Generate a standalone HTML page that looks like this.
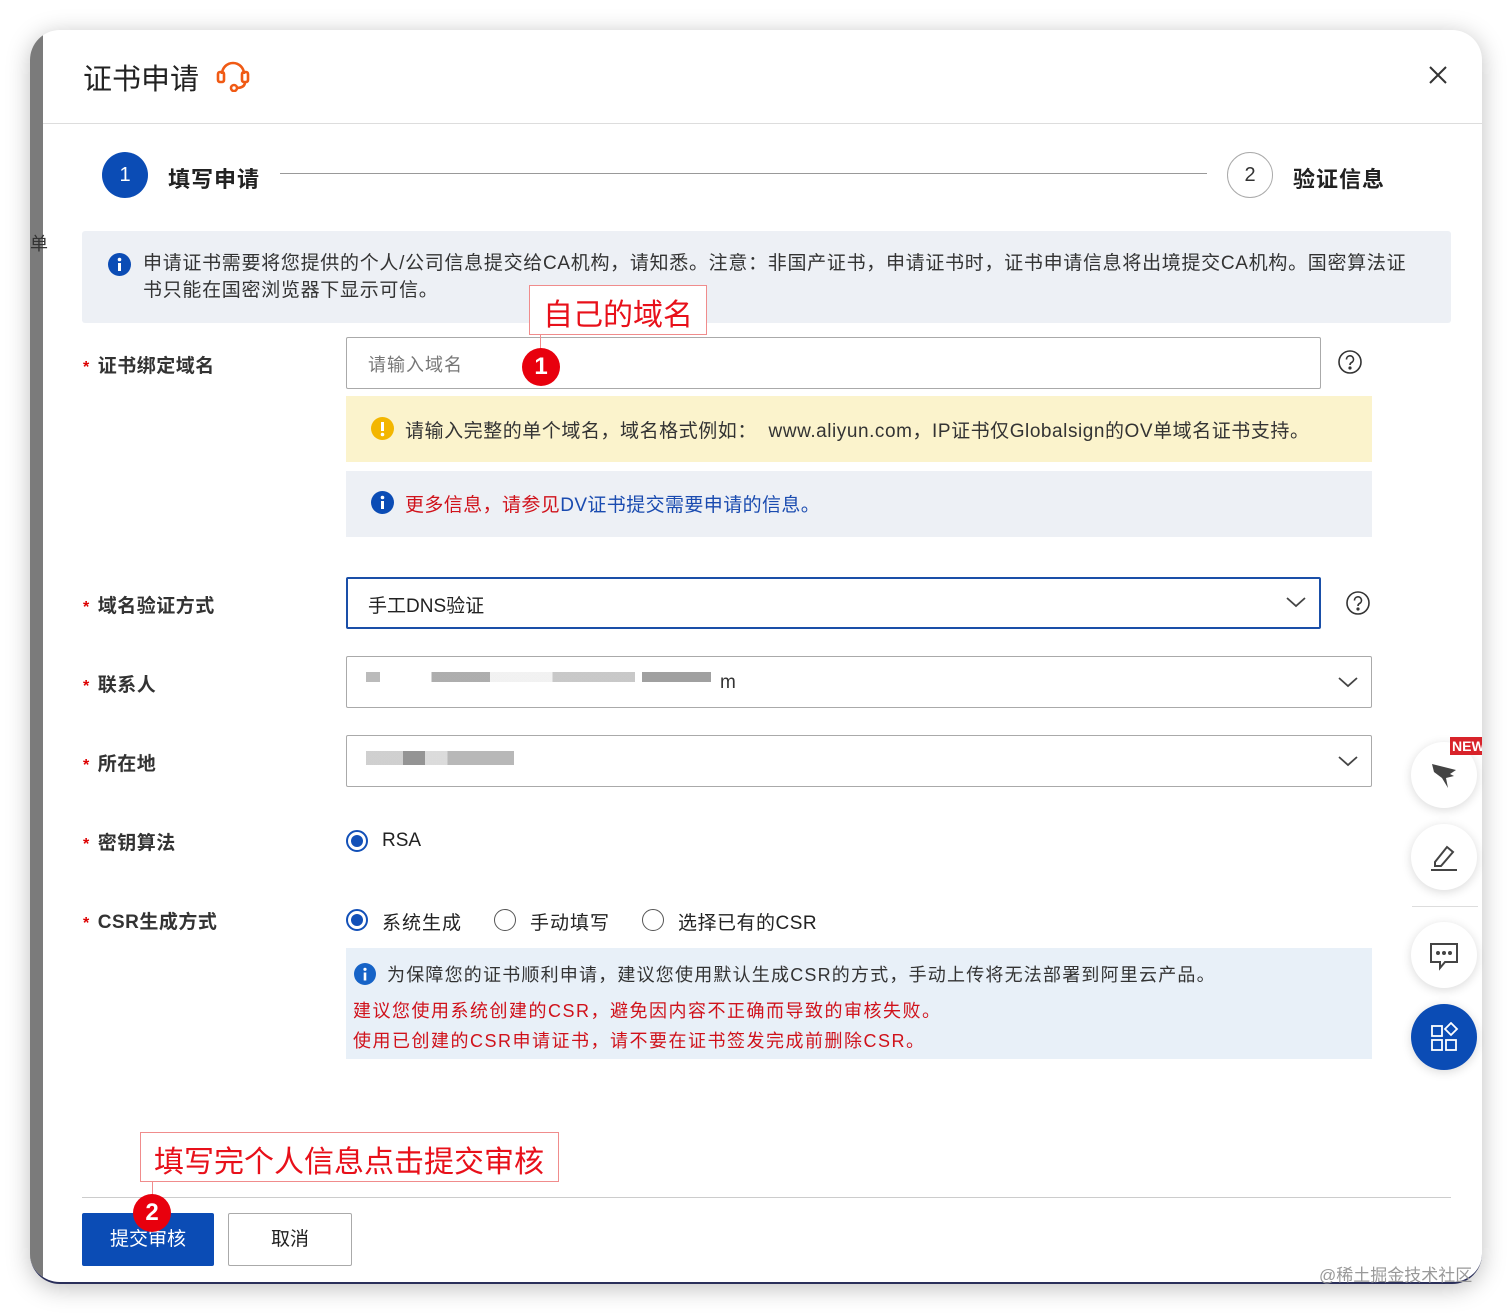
<!DOCTYPE html>
<html><head><meta charset="utf-8"><style>
*{box-sizing:border-box;margin:0;padding:0}
body{width:1512px;height:1315px;background:#fff;position:relative;overflow:hidden;font-family:"Liberation Sans","Noto Sans CJK SC",sans-serif;color:#333}
.abs{position:absolute}
.win{left:30px;top:30px;width:1452px;height:1254px;border-radius:30px;overflow:hidden;box-shadow:0 4px 24px rgba(0,0,0,.25);background:#fff;border-bottom:2px solid #2a2f5a}
.strip{left:0;top:0;width:13px;height:100%;background:#7b7b7b}
.lbl{font-size:19px;font-weight:bold;color:#333;letter-spacing:.5px}
.lbl b{color:#d00;margin-right:8px;font-size:16px}
.box{border:1px solid #aaa;border-radius:2px;background:#fff}
.t18{font-size:18px}
.radio{width:22px;height:22px;border-radius:50%;border:1.5px solid #555}
.radio.on{border:2px solid #1250b8}
.radio.on::after{content:"";position:absolute;left:3px;top:3px;width:12px;height:12px;border-radius:50%;background:#1250b8}
.badge{width:38px;height:38px;border-radius:50%;background:#e8000d;color:#fff;font-size:24px;font-weight:bold;text-align:center;line-height:38px}
.fb{width:66px;height:66px;border-radius:50%;background:#fff;box-shadow:0 2px 10px rgba(0,0,0,.15)}
</style></head><body>
<div class="abs win">
 <div class="abs strip"></div>
 <div class="abs" style="left:0;top:200px;font-size:18px;color:#333">单</div>
</div>
<!-- header -->
<div class="abs" style="left:83px;top:56px;font-size:29px;color:#222">证书申请</div>
<svg class="abs" style="left:214px;top:56px" width="38" height="36" viewBox="0 0 38 36" fill="none" stroke="#f05a14" stroke-width="2.6"><path d="M8 18 a11 11 0 0 1 22 0"/><rect x="4" y="16" width="6" height="10" rx="2"/><rect x="28" y="16" width="6" height="10" rx="2"/><path d="M31 26 q0 6 -9 6"/><circle cx="20" cy="32" r="3"/></svg>
<svg class="abs" style="left:1428px;top:65px" width="20" height="20" stroke="#333" stroke-width="2"><path d="M2 2L18 18M18 2L2 18"/></svg>
<div class="abs" style="left:43px;top:123px;width:1439px;height:1px;background:#ddd"></div>
<!-- steps -->
<div class="abs" style="left:102px;top:152px;width:46px;height:46px;border-radius:50%;background:#0b4cb5;color:#fff;font-size:20px;text-align:center;line-height:46px">1</div>
<div class="abs" style="left:168px;top:162px;font-size:22px;font-weight:bold;color:#222;letter-spacing:1px">填写申请</div>
<div class="abs" style="left:280px;top:173px;width:927px;height:1px;background:#999"></div>
<div class="abs" style="left:1227px;top:152px;width:46px;height:46px;border-radius:50%;border:1px solid #aaa;color:#333;font-size:20px;text-align:center;line-height:44px">2</div>
<div class="abs" style="left:1293px;top:162px;font-size:22px;font-weight:bold;color:#222;letter-spacing:1px">验证信息</div>
<!-- info -->
<div class="abs" style="left:82px;top:231px;width:1369px;height:92px;background:#edf0f5;border-radius:3px"></div>
<svg class="abs" style="left:108px;top:253px" width="23" height="23"><circle cx="11.5" cy="11.5" r="11.5" fill="#0b4cb5"/><rect x="10" y="10" width="3" height="8" fill="#fff"/><circle cx="11.5" cy="6.5" r="1.8" fill="#fff"/></svg>
<div class="abs" style="left:143px;top:250px;width:1300px;line-height:27px;color:#333;font-size:19px;letter-spacing:.7px;white-space:nowrap">申请证书需要将您提供的个人/公司信息提交给CA机构，请知悉。注意：非国产证书，申请证书时，证书申请信息将出境提交CA机构。国密算法证<br>书只能在国密浏览器下显示可信。</div>
<!-- labels -->
<div class="abs lbl" style="left:83px;top:351px"><b>*</b>证书绑定域名</div>
<div class="abs lbl" style="left:83px;top:591px"><b>*</b>域名验证方式</div>
<div class="abs lbl" style="left:83px;top:670px"><b>*</b>联系人</div>
<div class="abs lbl" style="left:83px;top:749px"><b>*</b>所在地</div>
<div class="abs lbl" style="left:83px;top:828px"><b>*</b>密钥算法</div>
<div class="abs lbl" style="left:83px;top:907px"><b>*</b>CSR生成方式</div>
<!-- domain input -->
<div class="abs box" style="left:346px;top:337px;width:975px;height:52px"></div>
<div class="abs t18" style="left:368px;top:351px;color:#777;letter-spacing:1px">请输入域名</div>
<svg class="abs" style="left:1337px;top:349px" width="26" height="26" fill="none" stroke="#333" stroke-width="1.6"><circle cx="13" cy="13" r="11"/><path d="M9.5 10.5a3.5 3.5 0 1 1 5 3c-1.2.6-1.5 1.2-1.5 2.5"/><circle cx="13" cy="19" r=".8" fill="#333"/></svg>
<div class="abs" style="left:346px;top:396px;width:1026px;height:66px;background:#fbf3cc"></div>
<svg class="abs" style="left:371px;top:417px" width="23" height="23"><circle cx="11.5" cy="11.5" r="11.5" fill="#f3b600"/><rect x="10" y="5" width="3" height="9" fill="#fff"/><circle cx="11.5" cy="17.5" r="1.8" fill="#fff"/></svg>
<div class="abs t18" style="left:405px;top:416px;font-size:19px;color:#333;letter-spacing:.55px;white-space:nowrap">请输入完整的单个域名，域名格式例如：&nbsp; www.aliyun.com，IP证书仅Globalsign的OV单域名证书支持。</div>
<div class="abs" style="left:346px;top:471px;width:1026px;height:66px;background:#edf0f5"></div>
<svg class="abs" style="left:371px;top:491px" width="23" height="23"><circle cx="11.5" cy="11.5" r="11.5" fill="#0b4cb5"/><rect x="10" y="10" width="3" height="8" fill="#fff"/><circle cx="11.5" cy="6.5" r="1.8" fill="#fff"/></svg>
<div class="abs" style="left:405px;top:490px;font-size:19px;color:#1a4bb0;letter-spacing:.4px"><span style="color:#d0121b">更多信息，请参见</span>DV证书提交需要申请的信息。</div>
<!-- annotation 1 -->
<div class="abs" style="left:529px;top:285px;width:178px;height:50px;border:1.5px solid #f08c8c;background:#fff"></div>
<div class="abs" style="left:543px;top:290px;font-size:30px;color:#e8101a">自己的域名</div>
<div class="abs" style="left:540px;top:334px;width:1px;height:16px;background:#f08c8c"></div>
<div class="abs badge" style="left:522px;top:348px">1</div>
<!-- dns select -->
<div class="abs" style="left:346px;top:577px;width:975px;height:52px;border:2px solid #1a4fa8;border-radius:2px"></div>
<div class="abs t18" style="left:368px;top:591px;font-size:19px;color:#222">手工DNS验证</div>
<svg class="abs" style="left:1285px;top:595px" width="22" height="14" fill="none" stroke="#444" stroke-width="1.8"><path d="M2 3l9 8 9-8"/></svg>
<svg class="abs" style="left:1345px;top:590px" width="26" height="26" fill="none" stroke="#333" stroke-width="1.6"><circle cx="13" cy="13" r="11"/><path d="M9.5 10.5a3.5 3.5 0 1 1 5 3c-1.2.6-1.5 1.2-1.5 2.5"/><circle cx="13" cy="19" r=".8" fill="#333"/></svg>
<div class="abs box" style="left:346px;top:656px;width:1026px;height:52px"></div>
<div class="abs" style="left:366px;top:672px;width:345px;height:10px;background:linear-gradient(90deg,#aaa 0 4%,#fff 4% 19%,#999 19% 36%,#eee 36% 54%,#bbb 54% 78%,#fff 78% 80%,#888 80% 100%);opacity:.8"></div>
<div class="abs" style="left:720px;top:672px;font-size:19px;color:#333">m</div>
<svg class="abs" style="left:1337px;top:675px" width="22" height="14" fill="none" stroke="#444" stroke-width="1.8"><path d="M2 3l9 8 9-8"/></svg>
<div class="abs box" style="left:346px;top:735px;width:1026px;height:52px"></div>
<div class="abs" style="left:366px;top:751px;width:148px;height:14px;background:linear-gradient(90deg,#bbb 0 25%,#666 25% 40%,#ccc 40% 55%,#999 55% 100%);opacity:.7"></div>
<svg class="abs" style="left:1337px;top:754px" width="22" height="14" fill="none" stroke="#444" stroke-width="1.8"><path d="M2 3l9 8 9-8"/></svg>
<!-- radios -->
<div class="abs radio on" style="left:346px;top:830px"></div>
<div class="abs" style="left:382px;top:830px;font-size:19px;color:#222">RSA</div>
<div class="abs radio on" style="left:346px;top:909px"></div>
<div class="abs" style="left:382px;top:908px;font-size:19px;color:#222;letter-spacing:1px">系统生成</div>
<div class="abs radio" style="left:494px;top:909px"></div>
<div class="abs" style="left:530px;top:908px;font-size:19px;color:#222;letter-spacing:1px">手动填写</div>
<div class="abs radio" style="left:642px;top:909px"></div>
<div class="abs" style="left:678px;top:908px;font-size:19px;color:#222;letter-spacing:.5px">选择已有的CSR</div>
<div class="abs" style="left:346px;top:948px;width:1026px;height:111px;background:#e8f0f8"></div>
<svg class="abs" style="left:354px;top:963px" width="22" height="22"><circle cx="11" cy="11" r="11" fill="#1663c7"/><rect x="9.7" y="9.5" width="2.6" height="8" fill="#fff"/><circle cx="11" cy="6.3" r="1.6" fill="#fff"/></svg>
<div class="abs" style="left:387px;top:961px;font-size:18px;color:#333;letter-spacing:1.2px;white-space:nowrap">为保障您的证书顺利申请，建议您使用默认生成CSR的方式，手动上传将无法部署到阿里云产品。</div>
<div class="abs" style="left:353px;top:997px;font-size:18px;color:#d0121b;letter-spacing:1.5px;white-space:nowrap">建议您使用系统创建的CSR，避免因内容不正确而导致的审核失败。</div>
<div class="abs" style="left:353px;top:1027px;font-size:18px;color:#d0121b;letter-spacing:1.5px;white-space:nowrap">使用已创建的CSR申请证书，请不要在证书签发完成前删除CSR。</div>
<!-- footer -->
<div class="abs" style="left:140px;top:1132px;width:419px;height:50px;border:1.5px solid #f08c8c;background:#fff"></div>
<div class="abs" style="left:154px;top:1137px;font-size:30px;color:#e8101a">填写完个人信息点击提交审核</div>
<div class="abs" style="left:152px;top:1181px;width:1px;height:16px;background:#f08c8c"></div>
<div class="abs" style="left:82px;top:1197px;width:1369px;height:1px;background:#ccc"></div>
<div class="abs" style="left:82px;top:1213px;width:132px;height:53px;background:#0b4cb5;border-radius:2px;color:#fff;font-size:19px;text-align:center;line-height:53px">提交审核</div>
<div class="abs" style="left:228px;top:1213px;width:124px;height:53px;border:1px solid #aaa;border-radius:2px;color:#222;font-size:19px;text-align:center;line-height:51px">取消</div>
<div class="abs badge" style="left:133px;top:1194px">2</div>
<!-- float buttons -->
<div class="abs fb" style="left:1411px;top:742px"></div>
<svg class="abs" style="left:1430px;top:760px" width="28" height="30" fill="#444"><path d="M2 4 L26 10 L20 14 L24 16 L16 18 L18 28 L12 18 L4 12 Z"/></svg>
<div class="abs" style="left:1450px;top:737px;width:32px;height:18px;background:#d8232a;color:#fff;font-size:14px;font-weight:bold;line-height:18px;padding-left:2px;overflow:hidden">NEW</div>
<div class="abs fb" style="left:1411px;top:824px"></div>
<svg class="abs" style="left:1429px;top:842px" width="30" height="30" fill="none" stroke="#444" stroke-width="2"><path d="M6 20 L18 5 L24 10 L12 24 L6 24 Z"/><path d="M2 28 H28"/></svg>
<div class="abs" style="left:1412px;top:906px;width:66px;height:1px;background:#ddd"></div>
<div class="abs fb" style="left:1411px;top:922px"></div>
<svg class="abs" style="left:1429px;top:941px" width="30" height="30" fill="none" stroke="#444" stroke-width="2"><path d="M2 3 H28 V21 H16 L11 27 V21 H2 Z"/><circle cx="9" cy="12" r="1" fill="#444"/><circle cx="15" cy="12" r="1" fill="#444"/><circle cx="21" cy="12" r="1" fill="#444"/></svg>
<div class="abs fb" style="left:1411px;top:1004px;background:#0b4cb5"></div>
<svg class="abs" style="left:1430px;top:1022px" width="30" height="30" fill="none" stroke="#fff" stroke-width="1.8"><rect x="2" y="4" width="10" height="10"/><rect x="2" y="18" width="10" height="10"/><rect x="16" y="18" width="10" height="10"/><path d="M21 1 L27 7 L21 13 L15 7 Z"/></svg>
<div class="abs" style="left:1319px;top:1261px;font-size:17px;color:#999">@稀土掘金技术社区</div>
</body></html>
